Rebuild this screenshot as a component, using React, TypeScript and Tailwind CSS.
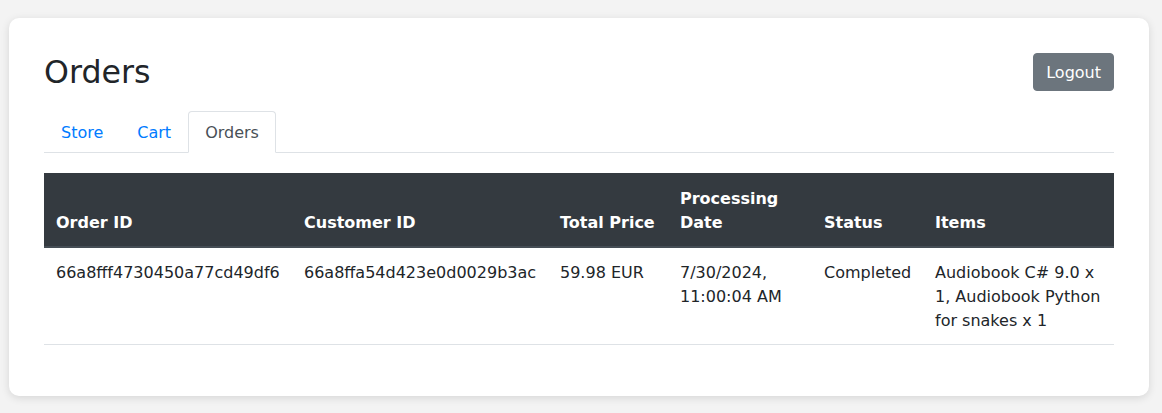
import React from "react";

const font = { fontFamily: '"DejaVu Sans", sans-serif' };

export default function App() {
  return (
    <div className="min-h-[413px] bg-[#f3f3f3] pt-[18px] pl-[9px]" style={font}>
      <div className="w-[1140px] rounded-[10px] bg-white p-[35px] pb-[35px] text-[16px] leading-[24px] text-[#212529] shadow-[0_2px_8px_rgba(0,0,0,0.12)]">
        <div className="flex items-center justify-between">
          <h2 className="text-[31.66px] leading-[38px] font-normal">Orders</h2>
          <button className="h-[38px] rounded-[4px] border border-[#6c757d] bg-[#6c757d] px-[12px] pt-[7px] pb-[5px] text-[16px] leading-[24px] text-white">
            Logout
          </button>
        </div>
        <div className="mt-[20px] flex border-b border-[#dee2e6]">
          <a className="-mb-px border border-transparent px-[16px] pt-[9px] pb-[7px] text-[#007bff]">Store</a>
          <a className="-mb-px border border-transparent px-[16px] pt-[9px] pb-[7px] text-[#007bff]">Cart</a>
          <a className="-mb-px rounded-t-[4px] border border-[#dee2e6] border-b-white bg-white px-[16px] pt-[9px] pb-[7px] text-[#495057]">
            Orders
          </a>
        </div>
        <table className="mt-[20px] mb-[16px] w-full table-fixed border-collapse">
          <colgroup>
            <col className="w-[248px]" />
            <col className="w-[256px]" />
            <col className="w-[120px]" />
            <col className="w-[144px]" />
            <col className="w-[111px]" />
            <col />
          </colgroup>
          <thead>
            <tr className="bg-[#343a40] text-white">
              {["Order ID", "Customer ID", "Total Price", "Processing Date", "Status", "Items"].map((h) => (
                <th
                  key={h}
                  className="border-t border-b-2 border-t-[#343a40] border-b-[#454d55] px-[12px] pt-[13px] pb-[11px] text-left align-bottom font-bold"
                >
                  {h}
                </th>
              ))}
            </tr>
          </thead>
          <tbody>
            <tr className="border-b border-[#dee2e6]">
              <td className="px-[12px] pt-[13px] pb-[11px] align-top">66a8fff4730450a77cd49df6</td>
              <td className="px-[12px] pt-[13px] pb-[11px] align-top">66a8ffa54d423e0d0029b3ac</td>
              <td className="px-[12px] pt-[13px] pb-[11px] align-top">59.98 EUR</td>
              <td className="px-[12px] pt-[13px] pb-[11px] align-top">7/30/2024, 11:00:04 AM</td>
              <td className="px-[12px] pt-[13px] pb-[11px] align-top">Completed</td>
              <td className="px-[12px] pt-[13px] pb-[11px] align-top">Audiobook C# 9.0 x 1, Audiobook Python for snakes x 1</td>
            </tr>
          </tbody>
        </table>
      </div>
    </div>
  );
}
